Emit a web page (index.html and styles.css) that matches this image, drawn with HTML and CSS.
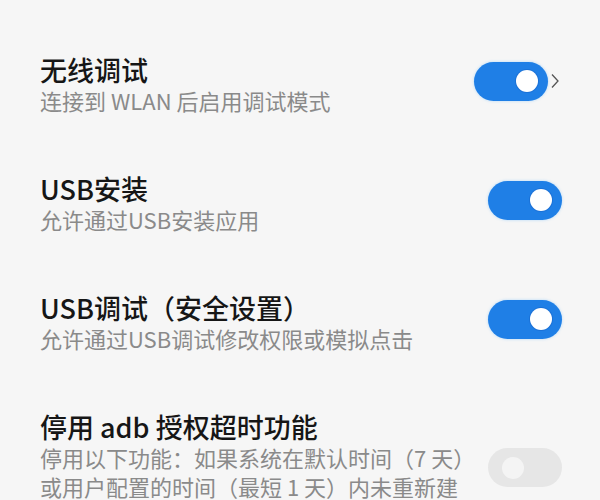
FILE: index.html
```html
<!DOCTYPE html>
<html lang="zh-CN">
  <head>
    <meta charset="UTF-8" />
    <meta name="viewport" content="width=device-width, initial-scale=1.0" />
    <title>开发者选项</title>
    <link rel="stylesheet" href="styles.css">
  </head>
  <body>
    <div class="list">
      <div class="item">
        <div class="text">
          <p class="title">无线调试</p>
          <p class="summary">连接到 WLAN 后启用调试模式</p>
        </div>
        <div class="action">
          <span class="switch on"></span>
          <svg class="arrow" width="14" height="16" viewBox="0 0 14 16">
            <path d="M4 1.5 L10 8 L4 14.5" fill="none" stroke="#555" stroke-width="1.3" />
          </svg>
        </div>
      </div>
      <div class="item">
        <div class="text">
          <p class="title">USB安装</p>
          <p class="summary">允许通过USB安装应用</p>
        </div>
        <span class="switch on"></span>
      </div>
      <div class="item">
        <div class="text">
          <p class="title">USB调试（安全设置）</p>
          <p class="summary">允许通过USB调试修改权限或模拟点击</p>
        </div>
        <span class="switch on"></span>
      </div>
      <div class="item">
        <div class="text">
          <p class="title">停用 adb 授权超时功能</p>
          <p class="summary">停用以下功能：如果系统在默认时间（7 天）<br />或用户配置的时间（最短 1 天）内未重新建</p>
        </div>
        <span class="switch off low"></span>
      </div>
    </div>
  </body>
</html>
```

FILE: styles.css
```css
html,
body {
  height: 100%;
}
body {
  margin: 0;
  overflow: hidden;
  background: #f6f6f6;
  font-family: "Noto Sans CJK SC", "Noto Sans", sans-serif;
}
.list {
  padding-top: 25px;
}
.item {
  display: flex;
  align-items: center;
  padding: 28px 38px 29px 40px;
}
.text {
  flex: 1;
}
.title {
  margin: 0;
  font-size: 27px;
  line-height: 33px;
  font-weight: 500;
  color: #161616;
}
.summary {
  margin: 0;
  font-size: 22px;
  line-height: 29px;
  color: #8a8a8a;
}
.action {
  display: flex;
  align-items: center;
  margin-bottom: 6px;
}
.switch {
  position: relative;
  width: 74px;
  height: 39px;
  border-radius: 20px;
  margin-bottom: 6px;
}
.action .switch {
  margin-bottom: 0;
}
.switch.low {
  margin: 24px 0 0;
}
.switch::after {
  content: "";
  position: absolute;
  top: 50%;
  width: 22px;
  height: 22px;
  margin-top: -11px;
  border-radius: 50%;
}
.on {
  background: #1f7fe6;
  box-shadow: 0 0 3px rgba(90, 180, 255, 0.45);
}
.on::after {
  right: 10px;
  background: #fff;
  box-shadow: 0 0 0 1px rgba(20, 90, 190, 0.35);
}
.off {
  background: #e6e6e6;
}
.off::after {
  left: 14px;
  background: #f4f4f4;
}
```
